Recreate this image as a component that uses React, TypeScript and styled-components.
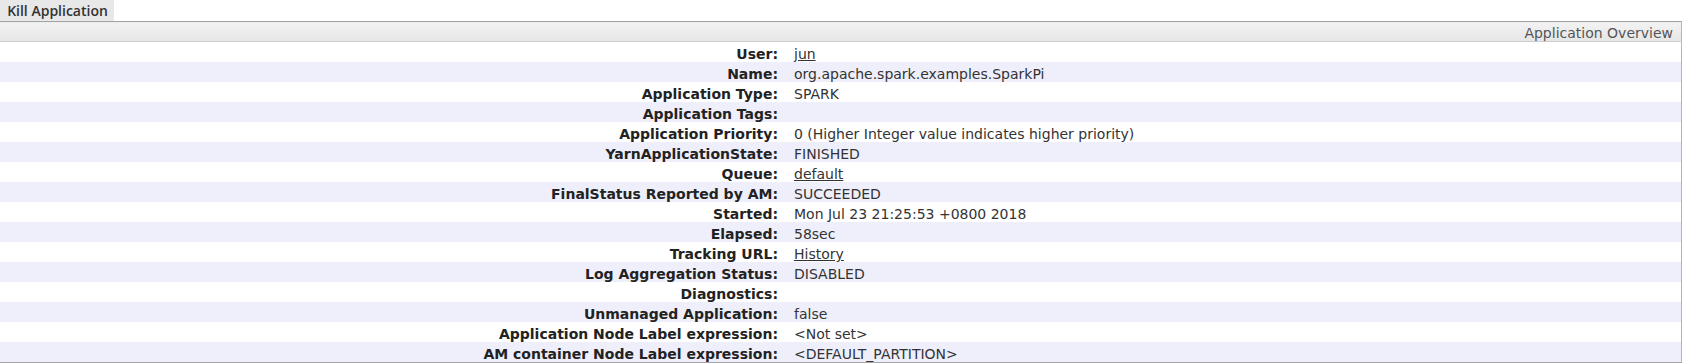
import React from "react";
import styled, { createGlobalStyle } from "styled-components";

const GlobalStyle = createGlobalStyle`
  html, body {
    margin: 0;
    padding: 0;
    background: #ffffff;
  }
  body {
    font-family: "DejaVu Sans", "Liberation Sans", sans-serif;
    font-size: 14px;
    color: #333333;
  }
`;

const Page = styled.div`
  display: flex;
  flex-direction: column;
  align-items: flex-start;
`;

const KillButton = styled.button`
  height: 21px;
  width: 114px;
  margin: 0;
  padding: 0 0 0 1px;
  border: none;
  background: #e8e8e8;
  color: #333333;
  font-family: "Open Sans", "Noto Sans", sans-serif;
  font-weight: 600;
  font-size: 14px;
  line-height: 21px;
  text-align: center;
  cursor: pointer;
`;

const InfoTable = styled.table`
  width: calc(100% - 1px);
  border-collapse: collapse;
  border-top: 1px solid #a3a3a3;
  border-right: 1px solid #b4b4b4;
  border-bottom: 1px solid #a8a8a8;
`;

const HeaderCell = styled.th`
  height: 19px;
  box-sizing: border-box;
  padding: 3px 8px 0 0;
  text-align: right;
  font-weight: normal;
  font-size: 14px;
  line-height: 16px;
  color: #555555;
  background: linear-gradient(#f2f2f2, #e6e6e6);
  border-bottom: 1px solid #cccccc;
  white-space: nowrap;
`;

const Row = styled.tr<{ $striped: boolean }>`
  background: ${(p) => (p.$striped ? "#efeffb" : "#ffffff")};
`;

const Label = styled.th`
  width: 786px;
  height: 20px;
  box-sizing: border-box;
  padding: 5px 8px 0 0;
  text-align: right;
  font-weight: bold;
  font-size: 14px;
  line-height: 15px;
  color: #222222;
  white-space: nowrap;
`;

const Value = styled.td`
  height: 20px;
  box-sizing: border-box;
  padding: 5px 0 0 8px;
  text-align: left;
  font-size: 14px;
  line-height: 15px;
  color: #333333;
  white-space: nowrap;
`;

const Link = styled.a`
  color: #333333;
  text-decoration: underline;
`;

type Item = { label: string; value: string; link?: boolean };

const items: Item[] = [
  { label: "User:", value: "jun", link: true },
  { label: "Name:", value: "org.apache.spark.examples.SparkPi" },
  { label: "Application Type:", value: "SPARK" },
  { label: "Application Tags:", value: "" },
  { label: "Application Priority:", value: "0 (Higher Integer value indicates higher priority)" },
  { label: "YarnApplicationState:", value: "FINISHED" },
  { label: "Queue:", value: "default", link: true },
  { label: "FinalStatus Reported by AM:", value: "SUCCEEDED" },
  { label: "Started:", value: "Mon Jul 23 21:25:53 +0800 2018" },
  { label: "Elapsed:", value: "58sec" },
  { label: "Tracking URL:", value: "History", link: true },
  { label: "Log Aggregation Status:", value: "DISABLED" },
  { label: "Diagnostics:", value: "" },
  { label: "Unmanaged Application:", value: "false" },
  { label: "Application Node Label expression:", value: "<Not set>" },
  { label: "AM container Node Label expression:", value: "<DEFAULT_PARTITION>" },
];

export default function App() {
  return (
    <>
      <GlobalStyle />
      <Page>
        <KillButton type="button">Kill Application</KillButton>
        <InfoTable>
          <thead>
            <tr>
              <HeaderCell colSpan={2}>Application Overview</HeaderCell>
            </tr>
          </thead>
          <tbody>
            {items.map((it, i) => (
              <Row key={it.label} $striped={i % 2 === 1}>
                <Label>{it.label}</Label>
                <Value>
                  {it.link ? <Link href="#">{it.value}</Link> : it.value}
                </Value>
              </Row>
            ))}
          </tbody>
        </InfoTable>
      </Page>
    </>
  );
}
